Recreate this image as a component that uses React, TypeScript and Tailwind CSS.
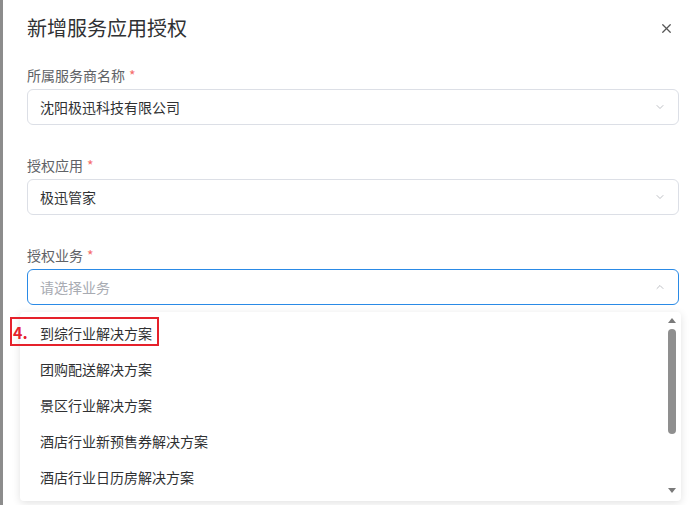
import { X, ChevronDown, ChevronUp } from "lucide-react";

const font = { fontFamily: '"Noto Sans CJK SC", "Noto Sans", sans-serif' };

function Label({ text }: { text: string }) {
  return (
    <div className="h-[22px] leading-[22px] text-[14px] text-[#606266] mb-[3px]">
      {text}
      <span className="text-[#f56c6c] ml-1">*</span>
    </div>
  );
}

function Select({ value, placeholder, open }: { value?: string; placeholder?: string; open?: boolean }) {
  return (
    <div
      className={`h-[36px] rounded-[6px] border flex items-center justify-between pl-[12px] pr-[12px] bg-white ${
        open ? "border-[#2a8ae6]" : "border-[#dcdfe6]"
      }`}
    >
      <span className={`text-[14px] ${value ? "text-[#303133]" : "text-[#a8abb2]"}`}>{value ?? placeholder}</span>
      {open ? (
        <ChevronUp size={12} strokeWidth={1.5} className="text-[#a8abb2]" />
      ) : (
        <ChevronDown size={12} strokeWidth={1.5} className="text-[#a8abb2]" />
      )}
    </div>
  );
}

const options = ["到综行业解决方案", "团购配送解决方案", "景区行业解决方案", "酒店行业新预售券解决方案", "酒店行业日历房解决方案"];

export default function App() {
  return (
    <div className="w-[700px] h-[505px] flex bg-white overflow-hidden" style={font}>
      <div className="w-[3px] bg-[#8c8c8c]" />
      <div className="relative flex-1 pl-[24px] pr-[21px]">
        <div className="flex items-center justify-between pt-[14px] h-[42px]">
          <h2 className="text-[20px] leading-[28px] text-[#303133]">新增服务应用授权</h2>
          <X size={15} strokeWidth={2} className="text-[#555] mr-[5px]" />
        </div>

        <div className="mt-[22px]">
          <Label text="所属服务商名称" />
          <Select value="沈阳极迅科技有限公司" />
        </div>
        <div className="mt-[29px]">
          <Label text="授权应用" />
          <Select value="极迅管家" />
        </div>
        <div className="mt-[29px]">
          <Label text="授权业务" />
          <Select placeholder="请选择业务" open />
        </div>

        {/* dropdown popover */}
        <div className="absolute left-[17px] right-[19px] top-[312px] h-[189px] bg-white rounded-[4px] shadow-[0_2px_8px_rgba(0,0,0,0.12)] flex">
          <div className="flex-1 pt-[3px]">
            {options.map((o) => (
              <div key={o} className="h-[36px] flex items-center pl-[20px] text-[14px] text-[#303133]">
                {o}
              </div>
            ))}
          </div>
          <div className="w-[14px] mr-[2px] flex flex-col items-center pt-[6px] pb-[8px]">
            <div className="w-0 h-0 border-l-[4px] border-r-[4px] border-b-[5px] border-l-transparent border-r-transparent border-b-[#7a7a7a]" />
            <div className="w-[8px] h-[105px] mt-[6px] rounded-full bg-[#8f8f8f]" />
            <div className="flex-1" />
            <div className="w-0 h-0 border-l-[4px] border-r-[4px] border-t-[5px] border-l-transparent border-r-transparent border-t-[#7a7a7a]" />
          </div>
        </div>

        {/* annotation */}
        <div className="absolute left-[7px] top-[317px] w-[149px] h-[29px] border-2 border-[#e5212b] flex items-center pl-[1px]">
          <span className="text-[16px] font-bold text-[#e5212b] leading-none">4.</span>
        </div>
      </div>
    </div>
  );
}
